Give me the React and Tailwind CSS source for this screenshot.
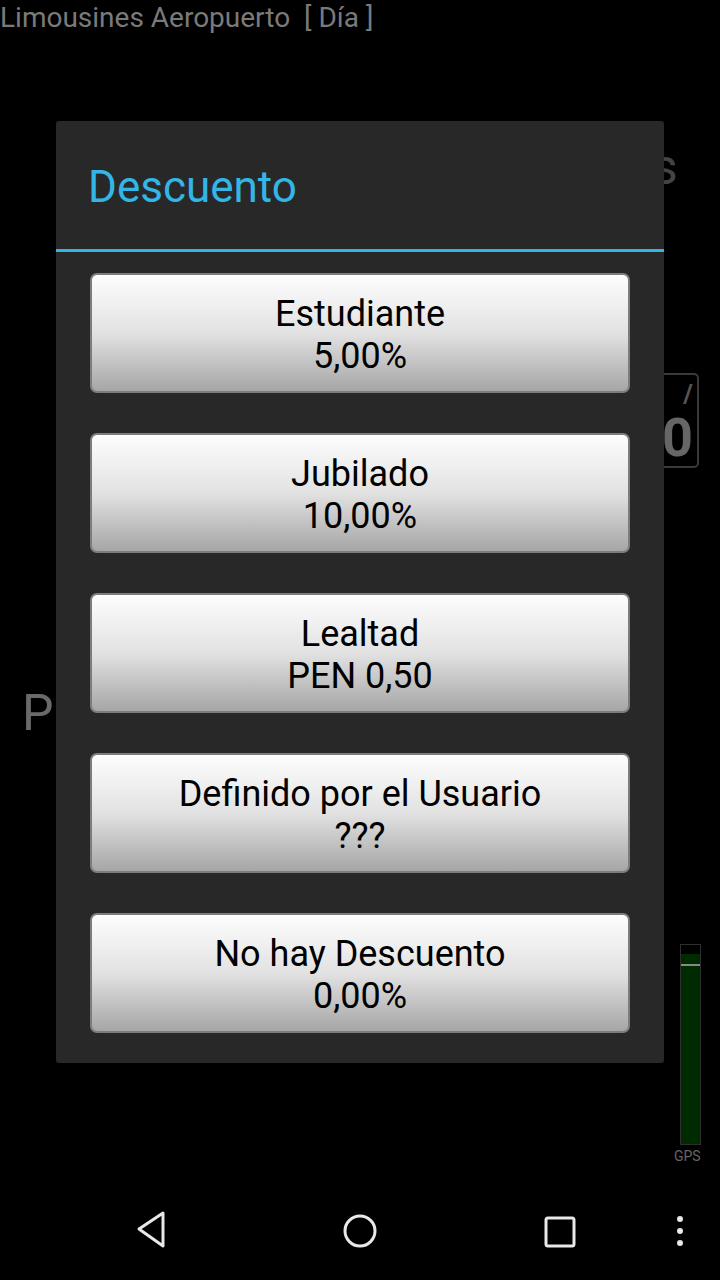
import React from "react";

const items = [
  ["Estudiante", "5,00%"],
  ["Jubilado", "10,00%"],
  ["Lealtad", "PEN 0,50"],
  ["Definido por el Usuario", "???"],
  ["No hay Descuento", "0,00%"],
];

export default function App() {
  return (
    <div className="relative w-[720px] h-[1280px] bg-black overflow-hidden" style={{ fontFamily: "Roboto, 'Noto Sans', sans-serif" }}>
      {/* app header */}
      <div className="h-[36px] text-[28px] leading-[36px] text-[#7a7a7a] whitespace-pre">Limousines Aeropuerto  [ Día ]</div>

      {/* background canvas hints */}
      <div className="absolute left-[652px] top-[142px] text-[50px] leading-none text-[#444444]">s</div>
      <div className="absolute left-[657px] top-[373px] w-[42px] h-[95px] border-2 border-[#3a3a3a] rounded-[5px] flex flex-col items-end pr-[4px] text-[#666666] font-bold">
        <span className="text-[26px] leading-[26px] h-[26px] mt-[6px] text-[#555555]">/</span>
        <span className="text-[54px] leading-[54px] h-[54px] mt-[4px]">0</span>
      </div>
      <div className="absolute left-[22px] top-[688px] text-[50px] leading-none text-[#6a6a6a]">P</div>
      <div className="absolute left-[680px] top-[944px] w-[21px] h-[201px] border border-[#2e2e2e] bg-[#002a00] flex flex-col">
        <div className="h-[9px] bg-black"></div>
        <div className="h-[2px] mt-[10px] bg-[#888888]"></div>
      </div>
      <div className="absolute left-[674px] top-[1149px] text-[14px] leading-none text-[#666666]">GPS</div>

      {/* dialog */}
      <div className="absolute left-[56px] top-[121px] w-[608px] bg-[#282828] rounded-[3px] flex flex-col">
        <div className="h-[128px] flex items-center pl-[32px] pt-[4px] text-[44px] text-[#33b5e5]">Descuento</div>
        <div className="h-[3px] bg-[#33b5e5]"></div>
        <div className="flex flex-col gap-[40px] px-[34px] pt-[21px] pb-[30px]">
          {items.map(([a, b]) => (
            <div
              key={a}
              className="h-[120px] pt-[3px] rounded-[7px] border-2 border-[#7d7d7d] bg-gradient-to-b from-[#fdfdfd] via-[#e2e2e2] to-[#a6a6a6] flex flex-col items-center justify-center text-black text-[36px] leading-[42px]"
            >
              <span>{a}</span>
              <span>{b}</span>
            </div>
          ))}
        </div>
      </div>

      {/* nav bar */}
      <div className="absolute left-0 bottom-0 w-[720px] h-[96px]">
        <svg className="absolute left-[136px] top-[27px]" width="32" height="40" viewBox="0 0 32 40">
          <path d="M27 2 L3 18 L27 35 Z" fill="none" stroke="#e8e8e8" strokeWidth="3" strokeLinejoin="round" />
        </svg>
        <svg className="absolute left-[342px] top-[29px]" width="36" height="36" viewBox="0 0 36 36">
          <circle cx="18" cy="18" r="15" fill="none" stroke="#e8e8e8" strokeWidth="3" />
        </svg>
        <svg className="absolute left-[543px] top-[31px]" width="34" height="34" viewBox="0 0 34 34">
          <rect x="3" y="3" width="28" height="28" rx="2" fill="none" stroke="#e8e8e8" strokeWidth="3" />
        </svg>
        <svg className="absolute left-[673px] top-[29px]" width="14" height="36" viewBox="0 0 14 36">
          <circle cx="7" cy="6" r="3" fill="#e8e8e8" />
          <circle cx="7" cy="18" r="3" fill="#e8e8e8" />
          <circle cx="7" cy="30" r="3" fill="#e8e8e8" />
        </svg>
      </div>
    </div>
  );
}
